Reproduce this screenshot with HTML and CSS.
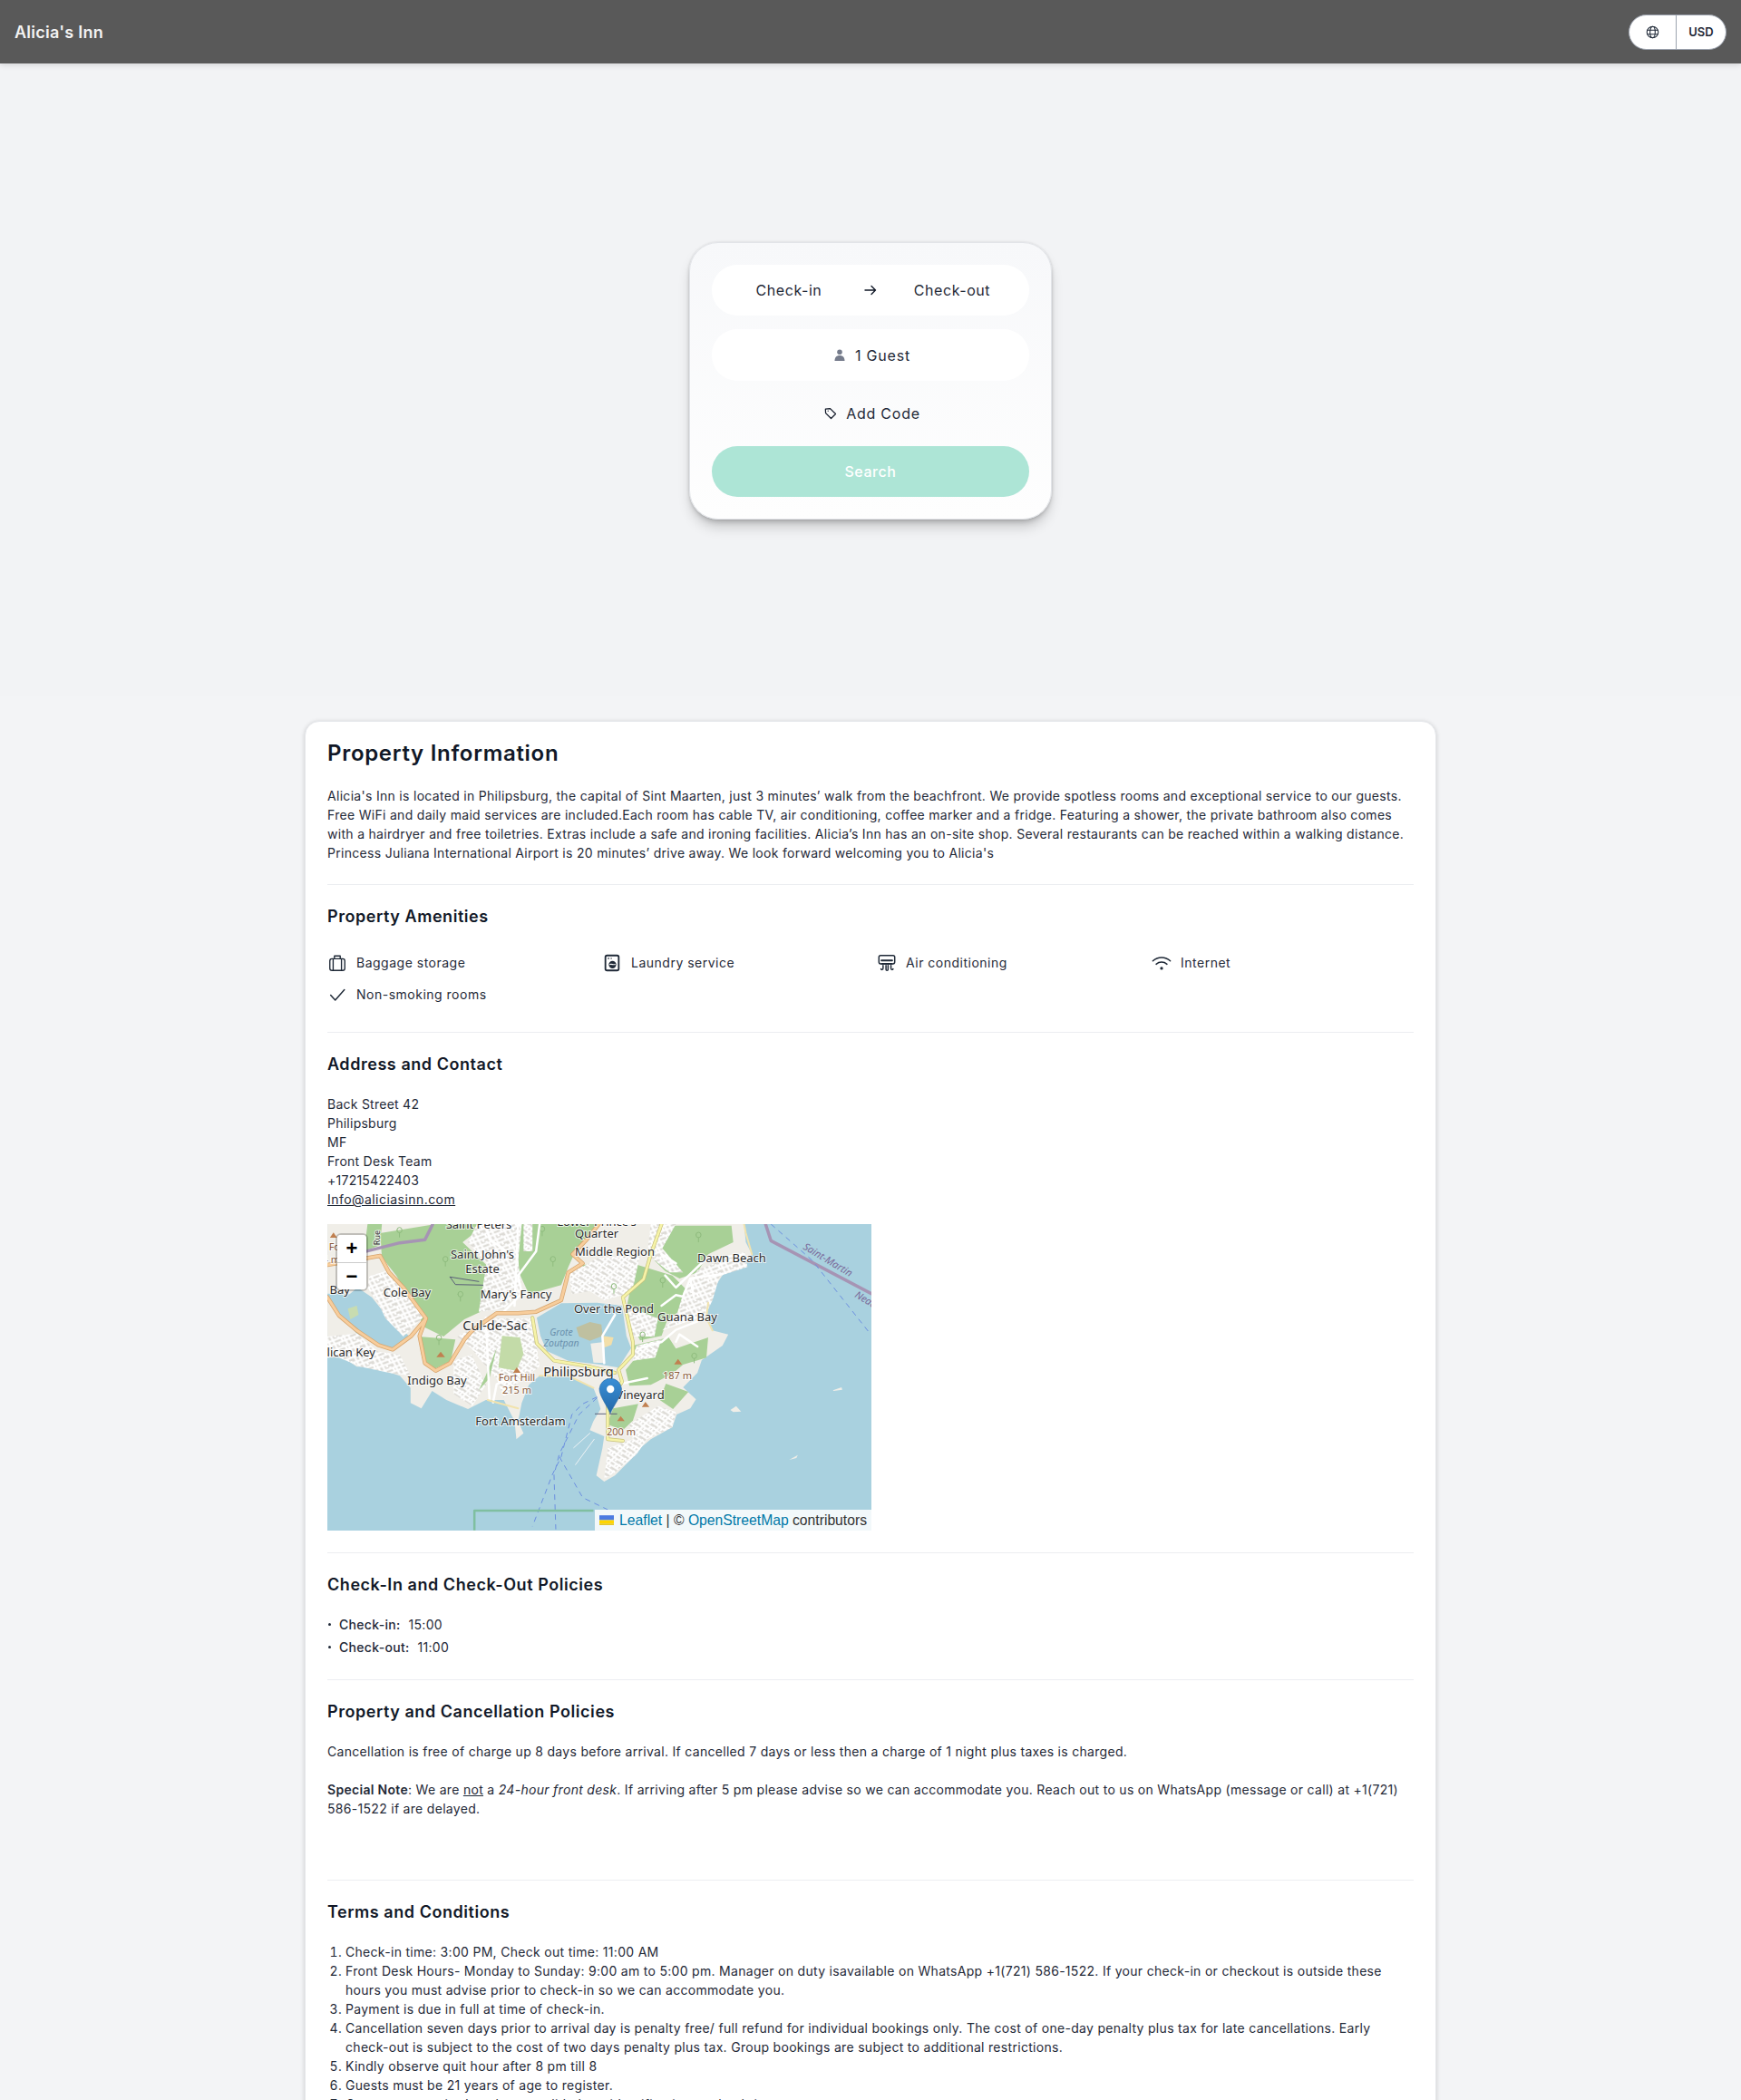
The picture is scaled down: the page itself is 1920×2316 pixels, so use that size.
FILE: index.html
```html
<!DOCTYPE html>
<html lang="en">
<head>
<meta charset="utf-8">
<title>Alicia's Inn</title>
<link rel="stylesheet" href="styles.css">
</head>
<body>
<div class="page">
  <header class="topbar">
    <a class="brand">Alicia's Inn</a>
    <div class="switcher">
      <button class="switch-btn lang" aria-label="Language">
        <svg class="icon-globe" viewBox="0 0 24 24" fill="none" stroke="#1f2937" stroke-width="1.700"><circle cx="12" cy="12" r="10"/><ellipse cx="12" cy="12" rx="4.500" ry="10"/><path d="M2.500 8.500h19M2.500 15.500h19"/></svg>
      </button>
      <button class="switch-btn cur">USD</button>
    </div>
  </header>

  <section class="hero">
    <form class="search-card">
      <div class="pill dates">
        <span class="date">Check-in</span>
        <svg class="icon-arrow" viewBox="0 0 16 16" fill="none" stroke="#111827" stroke-width="1.400" stroke-linecap="round" stroke-linejoin="round"><path d="M2 8h11.500M9 3.500 13.500 8 9 12.500"/></svg>
        <span class="date">Check-out</span>
      </div>
      <div class="pill guests">
        <svg class="icon-person" viewBox="0 0 12 13" fill="#767c8c"><circle cx="6" cy="3.200" r="2.800"/><path d="M.5 13c0-4 2.200-6 5.500-6s5.500 2 5.500 6z"/></svg>
        <span>1 Guest</span>
      </div>
      <div class="add-code">
        <svg class="icon-tag" viewBox="0 0 16 16" fill="none" stroke="#111827" stroke-width="1.400" stroke-linejoin="round"><path d="M1.500 2.500 7.500 1.800 14.300 8.600 8.600 14.300 1.800 7.500z"/><circle cx="4.800" cy="4.800" r=".7" fill="#111827" stroke="none"/></svg>
        <span>Add Code</span>
      </div>
      <button class="search-btn" type="button">Search</button>
    </form>
  </section>

  <main class="info-card">
    <section class="block">
      <h2>Property Information</h2>
      <p>Alicia's Inn is located in Philipsburg, the capital of Sint Maarten, just 3 minutes’ walk from the beachfront. We provide spotless rooms and exceptional service to our guests.<br>Free WiFi and daily maid services are included.Each room has cable TV, air conditioning, coffee marker and a fridge. Featuring a shower, the private bathroom also comes<br>with a hairdryer and free toiletries. Extras include a safe and ironing facilities. Alicia’s Inn has an on-site shop. Several restaurants can be reached within a walking distance.<br>Princess Juliana International Airport is 20 minutes’ drive away. We look forward welcoming you to Alicia's</p>
    </section>

    <section class="block">
      <h3>Property Amenities</h3>
      <ul class="amenities">
        <li>
          <svg viewBox="0 0 24 24" fill="none" stroke="#1f2937" stroke-width="1.500" stroke-linejoin="round"><rect x="3" y="7" width="18" height="14" rx="2.500"/><path d="M8.500 7V3.500h7V7M7 7v14M17 7v14"/></svg>
          Baggage storage
        </li>
        <li>
          <svg viewBox="0 0 24 24" fill="none" stroke="#1f2937" stroke-width="2"><rect x="4" y="3" width="16" height="18" rx="2"/><circle cx="12.500" cy="14" r="4.500" fill="#1f2937" stroke="none"/><path d="M9 14c2-1.500 5 1 7-.5" stroke="#fff" stroke-width="1.200"/><path d="M7 6.500h1.500M10.500 6.500h1" stroke-width="1.500"/></svg>
          Laundry service
        </li>
        <li>
          <svg viewBox="0 0 24 24" fill="none" stroke="#1f2937" stroke-width="1.600" stroke-linecap="round"><rect x="2.500" y="3" width="19" height="10" rx="2"/><path d="M5.500 9h13M6 13h12" stroke-width="2"/><path d="M7.500 15v3.500c0 2-2.500 2-2.500.5M11 15v5c0 1.500 2.500 1.500 2.500 0v-5M17 15v3.500c0 2 2.500 2 2.500.5"/></svg>
          Air conditioning
        </li>
        <li>
          <svg viewBox="0 0 24 24" fill="none" stroke="#1f2937" stroke-width="1.600" stroke-linecap="round"><path d="M1.500 9.500c6-5.500 15-5.500 21 0M5.500 13.500c3.800-3.300 9.200-3.300 13 0"/><circle cx="12" cy="18.500" r="1.800" fill="#1f2937" stroke="none"/></svg>
          Internet
        </li>
        <li>
          <svg viewBox="0 0 24 24" fill="none" stroke="#1f2937" stroke-width="1.600" stroke-linecap="round" stroke-linejoin="round"><path d="M4 12.500 9.500 18.500 20.500 6"/></svg>
          Non-smoking rooms
        </li>
      </ul>
    </section>

    <section class="block">
      <h3>Address and Contact</h3>
      <address class="contact">
        Back Street 42<br>Philipsburg<br>MF<br>Front Desk Team<br>+17215422403<br><a class="mail">Info@aliciasinn.com</a>
      </address>
      <div class="map">
        <svg class="map-svg" viewBox="0 0 600 338" preserveAspectRatio="none">
          <defs>
            <pattern id="streets" patternUnits="userSpaceOnUse" width="46" height="30" patternTransform="rotate(-24)">
              <rect width="46" height="30" fill="#dddbd6"/>
              <path d="M0 7h46M0 20h46M9 0v30M27 0v8M33 8v12M20 20v10M42 0v30" stroke="#fff" stroke-width="6" fill="none"/>
            </pattern>
            <pattern id="streets2" patternUnits="userSpaceOnUse" width="38" height="26" patternTransform="rotate(38)">
              <rect width="38" height="26" fill="#dddbd6"/>
              <path d="M0 5h38M0 17h38M6 0v26M24 5v12M15 17v9M33 0v17" stroke="#fff" stroke-width="6" fill="none"/>
            </pattern>
            <linearGradient id="pin" x1="0" y1="0" x2="0" y2="1"><stop offset="0" stop-color="#3b8fd6"/><stop offset="1" stop-color="#2368a8"/></linearGradient>
          </defs>
          <rect class="sea" width="600" height="338"/>
          <g transform="translate(-11 -10) scale(.3954 .3333)">
            <path class="land" d="M28 30H1190L1195 90 1212 130 1180 172 1132 195 1112 232 1092 290 1085 340 1102 382 1146 395 1130 432 1072 480 1060 522 1020 570 1056 610 1040 640 1002 660 990 702 930 742 900 772 880 802 830 862 800 882 778 862 795 772 800 732 760 712 770 682 790 642 780 602 770 572 700 532 620 532 590 562 570 622 560 682 575 722 555 742 550 682 520 612 470 612 420 642 360 612 320 582 290 640 260 622 260 572 230 532 150 502 110 502 60 462 28 472Z"/>
            <path class="water" d="M28 278 62 332 110 392 170 432 210 444 255 400 192 332 152 272 112 240 90 262 28 260Z"/>
            <path class="islet" d="M85 310 110 300 115 330 92 345Z"/>
            <path class="water" d="M612 340 680 292 780 290 850 300 862 400 875 440 840 505 790 495 700 482 640 450 622 400Z"/>
            <path class="mud" d="M722 372 760 354 792 362 796 400 760 416 730 402Z"/>
            <path class="sand" d="M796 400 826 405 820 430 796 440Z"/>
            <path class="land" d="M762 425 800 420 802 490 770 488Z"/>

            <path class="forest" d="M175 60 330 30H470L405 90 480 175 470 250 455 320 410 345 352 402 300 372 280 332 250 262 220 200 180 140Z"/>
            <path class="forest" d="M570 30H790L745 90 712 140 700 172 680 232 590 262 562 190 560 100Z"/>
            <path class="forest" d="M740 165 810 160 880 200 882 232 860 262 810 252 745 242Z"/>
            <path class="forest" d="M950 35H1155L1160 90 1090 130 1060 190 1010 210 970 185 940 150Z"/>
            <path class="forest" d="M893 165 990 200 1028 245 1028 300 975 350 960 400 900 415 860 322 870 262Z"/>
            <path class="forest" d="M880 432 980 405 1000 442 1090 405 1085 472 1020 495 990 525 930 562 870 565 860 512 895 462Z"/>
            <path class="forest" d="M282 402 385 412 372 482 322 512 292 472Z"/>
            <path class="forest-lite" d="M510 392 570 400 582 462 560 522 500 510 490 440Z"/>
            <path class="forest" d="M412 492 470 562 432 602 412 562Z"/>
            <path class="forest" d="M825 640 895 625 880 680 852 712 808 692Z"/>
            <path class="forest" d="M972 558 1035 585 992 642 955 612Z"/>
            <path class="forest" d="M140 30H180L175 100 130 120Z"/>

            <g class="town">
              <path d="M445 30H570L560 150 570 250 520 310 450 320 462 232 472 160 420 90Z"/>
              <path d="M145 202 200 182 300 332 240 402 190 342 170 292 140 242Z"/>
              <path d="M28 402 110 392 170 452 230 462 260 532 200 522 120 502 60 472 28 472Z"/>
              <path d="M860 300 950 342 940 402 880 402Z"/>
              <path d="M930 30H1000L962 110 1020 190 982 190 920 130Z"/>
              <path d="M1060 182 1190 122 1200 172 1122 202 1102 282 1082 332 962 382 1002 332 1022 252Z"/>
            </g>
            <g class="town alt">
              <path d="M390 402 490 342 600 342 620 502 570 542 520 602 500 542 450 472 430 442Z"/>
              <path d="M380 482 430 462 470 562 432 632 380 592Z"/>
              <path d="M700 190 740 172 780 142 900 132 882 232 860 262 800 282 760 252 710 262Z"/>
              <path d="M890 432 960 412 942 472 880 482Z"/>
              <path d="M870 692 950 632 1000 652 990 702 920 742 890 792 830 852 800 872 810 772 880 742Z"/>
              <path d="M575 30H600V120H575Z"/>
            </g>
            <path class="forest-lite" d="M515 400 565 405 575 460 555 515 505 505Z"/>
            <path class="forest" d="M470 530 500 440 480 540 450 580Z"/>

            <path class="trees" d="M222 50a7 9 0 1 1 14 0a7 9 0 1 1-14 0M229 59v14M350 146a7 9 0 1 1 14 0a7 9 0 1 1-14 0M357 155v14M392 262a7 9 0 1 1 14 0a7 9 0 1 1-14 0M399 271v14M620 46a7 9 0 1 1 14 0a7 9 0 1 1-14 0M627 55v14M650 146a7 9 0 1 1 14 0a7 9 0 1 1-14 0M657 155v14M820 236a7 9 0 1 1 14 0a7 9 0 1 1-14 0M827 245v14M1056 66a7 9 0 1 1 14 0a7 9 0 1 1-14 0M1063 75v14M956 216a7 9 0 1 1 14 0a7 9 0 1 1-14 0M963 225v14M900 396a7 9 0 1 1 14 0a7 9 0 1 1-14 0M907 405v14M1044 466a7 9 0 1 1 14 0a7 9 0 1 1-14 0M1051 475v14M332 406a7 9 0 1 1 14 0a7 9 0 1 1-14 0M339 415v14"/>
            <path class="street" d="M970 200 1000 240 1080 150 1190 130M1020 270 1040 210 1130 195M960 300 1000 265 1020 270M1085 340 1000 380 960 420 900 440M1000 420 1010 395 1060 435M830 330 795 400 800 490M470 340 480 610M560 30 550 300M620 30 610 120 560 200 570 260 520 320M470 30 480 80 540 130M960 130 1000 160M1040 210 1050 270M560 530 500 560 490 620M840 560 920 540"/>
            <path class="beach" d="M620 532 700 532 770 572M1090 290 1085 340 1102 382M1212 130 1195 60 1190 30M475 612 560 640"/>
            <path class="boundary" d="M1250 30 1265 85 1545 260"/>
            <path class="boundary" d="M130 122 230 92 300 82 322 30"/>
            <path class="ferry" d="M1265 30 1380 150 1540 390"/>
            <path class="ferry" d="M780 602 740 625 710 660 680 800 655 860 600 1030M780 605 730 660 675 790 660 860 665 1040M675 800 740 935 810 975"/>
            <path class="lines" d="M370 205 385 230 462 232M370 205 450 220M775 658H835"/>
            <path class="pier" d="M715 770 760 722M720 826 772 742"/>
            <path class="protect" d="M438 1043V978H770"/>

            <path class="trunk-case" d="M28 165 175 135 200 190 240 240 303 342 262 400 210 445 170 430 110 382 60 332 28 272M303 342 285 400 300 490 330 515 370 490 410 412 432 382 482 340 500 325 560 325 610 320 680 282 700 190 740 160 712 130 752 80 785 30"/>
            <path class="trunk" d="M28 165 175 135 200 190 240 240 303 342 262 400 210 445 170 430 110 382 60 332 28 272M303 342 285 400 300 490 330 515 370 490 410 412 432 382 482 340 500 325 560 325 610 320 680 282 700 190 740 160 712 130 752 80 785 30"/>
            <path class="sec-case" d="M960 30 930 130 910 212 852 272 880 420 880 462 840 512 850 552 810 622 810 742 852 747M600 340 612 425 660 482 762 502 830 522"/>
            <path class="sec" d="M960 30 930 130 910 212 852 272 880 420 880 462 840 512 850 552 810 622 810 742 852 747M600 340 612 425 660 482 762 502 830 522"/>
            <path class="peak" d="M332 470 344 452 356 470ZM546 522 556 504 567 522ZM995 494 1006 476 1017 494ZM905 635 915 618 926 635ZM836 682 846 665 857 682ZM35 75 45 58 55 75Z"/>
            <path class="isle" d="M1438 580 1462 570 1464 578 1440 582ZM1152 645 1168 632 1182 650 1160 652ZM1316 810 1340 794 1336 804Z"/>
          </g>

          <g class="labels">
            <text x="167" y="5">Saint Peters</text>
            <text x="297" y="2">Lower Prince's</text>
            <text x="297" y="15">Quarter</text>
            <text x="317" y="35">Middle Region</text>
            <text x="446" y="42">Dawn Beach</text>
            <text x="171" y="38">Saint John's</text>
            <text x="171" y="54">Estate</text>
            <text x="88" y="80">Cole Bay</text>
            <text x="208" y="82">Mary's Fancy</text>
            <text class="end" x="25" y="77">Simpson Bay</text>
            <text x="316" y="98">Over the Pond</text>
            <text x="397" y="107">Guana Bay</text>
            <text class="big" x="185" y="117">Cul-de-Sac</text>
            <text class="end" x="53" y="146">Pelican Key</text>
            <text class="big" x="277" y="168">Philipsburg</text>
            <text x="121" y="177">Indigo Bay</text>
            <text x="345" y="193">Vineyard</text>
            <text x="213" y="222">Fort Amsterdam</text>
            <text class="pond" x="258" y="123">Grote</text>
            <text class="pond" x="258" y="135">Zoutpan</text>
            <text class="elev" x="209" y="173">Fort Hill</text>
            <text class="elev" x="209" y="187">215 m</text>
            <text class="elev" x="386" y="171">187 m</text>
            <text class="elev" x="324" y="233">200 m</text>
            <text class="elev end" x="14" y="29">Fo</text>
            <text class="elev end" x="14" y="43">64 m</text>
            <text class="border" transform="translate(524 27) rotate(31)">Saint-Martin</text>
            <text class="border" transform="translate(581 80) rotate(31)">Nederland</text>
            <text class="road" transform="translate(58 15) rotate(-90)">Rue</text>
          </g>

          <path d="M312 209C308 199 300 190 300 181.500A12.300 12.300 0 0 1 324.500 181.500C324.500 190 316 199 312 209Z" fill="url(#pin)" stroke="#2a6ba6" stroke-width=".6"/>
          <circle cx="312.200" cy="182" r="4.200" fill="#fff"/>
        </svg>
        <div class="zoom-ctl">
          <button class="zoom-btn" type="button">+</button>
          <button class="zoom-btn" type="button">−</button>
        </div>
        <div class="attribution">
          <svg class="flag" viewBox="0 0 12 8"><path fill="#4C7BE1" d="M0 0h12v4H0z"/><path fill="#FFD500" d="M0 4h12v3H0z"/><path fill="#E0BC00" d="M0 7h12v1H0z"/></svg>
          <a>Leaflet</a> | © <a>OpenStreetMap</a> contributors
        </div>
      </div>
    </section>

    <section class="block">
      <h3>Check-In and Check-Out Policies</h3>
      <ul class="times">
        <li><strong>Check-in:</strong><span>15:00</span></li>
        <li><strong>Check-out:</strong><span>11:00</span></li>
      </ul>
    </section>

    <section class="block">
      <h3>Property and Cancellation Policies</h3>
      <p>Cancellation is free of charge up 8 days before arrival. If cancelled 7 days or less then a charge of 1 night plus taxes is charged.</p>
      <p class="note"><b>Special Note</b>: We are <u>not</u> a <i>24-hour front desk</i>. If arriving after 5 pm please advise so we can accommodate you. Reach out to us on WhatsApp (message or call) at +1(721)<br>586-1522 if are delayed.</p>
      <p class="empty">&nbsp;</p>
    </section>

    <section class="block last">
      <h3>Terms and Conditions</h3>
      <ol class="terms">
        <li>Check-in time: 3:00 PM, Check out time: 11:00 AM</li>
        <li>Front Desk Hours- Monday to Sunday: 9:00 am to 5:00 pm. Manager on duty isavailable on WhatsApp +1(721) 586-1522. If your check-in or checkout is outside these<br>hours you must advise prior to check-in so we can accommodate you.</li>
        <li>Payment is due in full at time of check-in.</li>
        <li>Cancellation seven days prior to arrival day is penalty free/ full refund for individual bookings only. The cost of one-day penalty plus tax for late cancellations. Early<br>check-out is subject to the cost of two days penalty plus tax. Group bookings are subject to additional restrictions.</li>
        <li>Kindly observe quit hour after 8 pm till 8</li>
        <li>Guests must be 21 years of age to register.</li>
        <li>Guests are required to show a valid photo identification at check-in.</li>
      </ol>
    </section>
  </main>
</div>
</body>
</html>
```

FILE: styles.css
```css
* { box-sizing: border-box; }
html, body { margin: 0; padding: 0; }
body {
  font-family: Inter, "Liberation Sans", sans-serif;
  color: #1f2937;
  background: #f3f4f6;
  font-size: 14px;
}
.page { height: 100vh; overflow: hidden; display: flex; flex-direction: column; }

.topbar {
  flex: none;
  height: 70px;
  background: #595959;
  box-shadow: 0 2px 6px rgba(0,0,0,.12);
  display: flex;
  align-items: center;
  justify-content: space-between;
  padding: 0 16px;
  position: relative;
}
.brand { font-size: 18px; font-weight: 600; color: #f3f3f3; letter-spacing: .25px; }
.switcher {
  display: flex;
  height: 39px;
  width: 108px;
  background: #fff;
  border: 1px solid #9ca3af;
  border-radius: 20px;
  overflow: hidden;
}
.switch-btn { border: 0; background: none; padding: 0; display: flex; align-items: center; justify-content: center; font: inherit; }
.lang { width: 52px; border-right: 1px solid #9ca3af; }
.cur { flex: 1; font-size: 13px; font-weight: 600; color: #1f2937; }
.icon-globe { width: 15px; height: 15px; }

.hero {
  flex: none;
  height: 698px;
  padding-top: 2px;
  background: #f2f3f5;
  display: flex;
  align-items: center;
  justify-content: center;
}
.search-card {
  width: 400px;
  height: 306px;
  padding: 24px;
  border: 1px solid #e2e4e8;
  border-radius: 32px;
  background: linear-gradient(#f7f8fa, #fefefe);
  box-shadow: 0 10px 15px -3px rgba(0,0,0,.2), 0 4px 6px -2px rgba(0,0,0,.18), 0 0 3px rgba(0,0,0,.12);
  display: flex;
  flex-direction: column;
  font-size: 16px;
  letter-spacing: .55px;
  color: #1f2937;
}
.pill { height: 56px; border-radius: 28px; background: #fff; display: flex; align-items: center; flex: none; }
.dates { justify-content: center; }
.date { width: 120px; text-align: center; }
.dates .date:first-child { margin-right: 22px; }
.dates .date:last-child { margin-left: 22px; }
.icon-arrow { width: 16px; height: 16px; flex: none; }
.guests { margin-top: 15px; justify-content: center; gap: 11px; height: 57px; letter-spacing: .8px; padding-left: 4px; }
.icon-person { width: 12px; height: 13px; }
.add-code { height: 72px; flex: none; display: flex; align-items: center; justify-content: center; gap: 10px; letter-spacing: .75px; padding-left: 4px; }
.icon-tag { width: 14px; height: 14px; }
.search-btn {
  height: 56px;
  flex: none;
  border: 0;
  border-radius: 28px;
  background: #ade5d6;
  color: #fff;
  font: 500 16px Inter, "Liberation Sans", sans-serif;
  letter-spacing: .55px;
}

.info-card {
  flex: none;
  width: 1248px;
  margin: 27px auto 0;
  padding: 19px 24px;
  background: #fff;
  border: 1px solid #e5e7eb;
  border-radius: 16px;
  box-shadow: 0 1px 5px rgba(0,0,0,.18);
  line-height: 21px;
  letter-spacing: .3px;
}
.block { padding-bottom: 24px; border-bottom: 1px solid #eceef1; margin-bottom: 21px; }
.block.last { border-bottom: 0; }
h2 { margin: 0 0 20px; font-size: 24px; line-height: 32px; font-weight: 600; color: #111827; letter-spacing: .7px; }
h3 { margin: 0 0 19px; font-size: 18px; line-height: 28px; font-weight: 600; color: #111827; letter-spacing: .55px; }
p { margin: 0; }
.note { margin-top: 21px; }
.empty { margin-top: 23px; }

.amenities { list-style: none; margin: 0; padding: 0; display: grid; grid-template-columns: repeat(4, 303px); letter-spacing: .5px; }
.amenities li { height: 35px; display: flex; align-items: center; gap: 10px; }
.amenities svg { width: 22px; height: 22px; flex: none; }

.contact { font-style: normal; letter-spacing: .25px; }
.mail { text-decoration: underline; letter-spacing: .45px; }
.map { position: relative; width: 600px; height: 338px; margin-top: 17px; overflow: hidden; background: #aad3df; letter-spacing: 0; }
.map-svg { display: block; width: 600px; height: 338px; }
.sea { fill: #a9d1df; }
.land { fill: #f0eee8; }
.water { fill: #a9d1df; }
.mud { fill: #bfc0a0; }
.sand { fill: #f3dfa9; }
.islet { fill: #c8dcb0; }
.forest { fill: #a8d096; }
.forest-lite { fill: #c3dba8; }
.town path { fill: url(#streets); }
.town.alt path { fill: url(#streets2); }
.street, .beach, .boundary, .ferry, .lines, .pier, .protect, .trunk, .trunk-case, .sec, .sec-case, .trees { fill: none; vector-effect: non-scaling-stroke; stroke-linejoin: round; stroke-linecap: round; }
.trees { stroke: #8fbc7e; stroke-width: 1; }
.street { stroke: #fff; stroke-width: 2.5; }
.beach { stroke: #f1e3ae; stroke-width: 2; }
.boundary { stroke: #a694b4; stroke-width: 3.5; }
.ferry { stroke: #6c8fe0; stroke-width: 1; stroke-dasharray: 6 5; stroke-linecap: butt; }
.lines { stroke: #5a5f78; stroke-width: 1; }
.pier { stroke: #eef3f5; stroke-width: 1; }
.protect { stroke: #7fbfa0; stroke-width: 2.5; stroke-linecap: butt; }
.trunk-case { stroke: #d6a46c; stroke-width: 4.5; }
.trunk { stroke: #f7cd9c; stroke-width: 3; }
.sec-case { stroke: #c8c27a; stroke-width: 4; }
.sec { stroke: #f6f3a8; stroke-width: 2.6; }
.peak { fill: #c08050; }
.isle { fill: #f0eee8; }
.labels text {
  font-family: "Noto Sans", sans-serif;
  font-size: 13px;
  fill: #2b2b2b;
  text-anchor: middle;
  stroke: rgba(255,255,255,.75);
  stroke-width: 2px;
  paint-order: stroke;
}
.labels .end { text-anchor: end; }
.labels .big { font-size: 14.5px; }
.labels .pond { font-style: italic; font-size: 10.500px; fill: #6a90ad; stroke: none; }
.labels .elev { font-size: 11px; fill: #8a5b3a; }
.labels .border { font-style: italic; font-size: 11px; fill: #7a6a9a; text-anchor: start; stroke: none; }
.labels .road { font-size: 9px; }

.zoom-ctl {
  position: absolute; left: 11px; top: 12px;
  width: 32px;
  display: flex; flex-direction: column;
  background: #fff;
  border-radius: 4px;
  box-shadow: 0 0 0 2px rgba(0,0,0,.2);
  overflow: hidden;
}
.zoom-btn {
  width: 32px; height: 30px; padding: 0; border: 0; background: #fff;
  font: bold 22px/30px "Liberation Sans", sans-serif; color: #000;
}
.zoom-btn + .zoom-btn { border-top: 1px solid #ccc; }
.attribution {
  position: absolute; right: 0; bottom: 0;
  padding: 0 5px;
  background: rgba(255,255,255,.85);
  font: 15.700px/23px "Liberation Sans", sans-serif;
  color: #333;
  white-space: nowrap;
}
.attribution a { color: #0078a8; }
.flag { width: 16px; height: 11px; margin-right: 2px; }

.times { list-style: none; margin: 0 0 1px; padding: 0; }
.times li { position: relative; padding-left: 13px; display: flex; gap: 9px; margin-bottom: 4px; }
.times li::before { content: ""; position: absolute; left: 1px; top: 9px; width: 3px; height: 3px; border-radius: 50%; background: #1f2937; }
.times li:last-child { margin-bottom: 0; }
.times strong { font-weight: 500; }

.note b { font-weight: 600; }
.terms { margin: 0; padding-left: 20px; }
```
